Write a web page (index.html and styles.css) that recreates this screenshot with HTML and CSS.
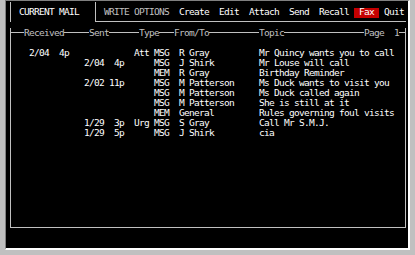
FILE: index.html
```html
<!DOCTYPE html>
<html>
<head>
<meta charset="utf-8">
<link rel="stylesheet" href="styles.css">
</head>
<body>
<div class="screen">
  <div class="frame">
    <div class="tabs">
      <div class="tab">CURRENT MAIL</div>
      <nav class="menu">
        <span class="mi dim">WRITE OPTIONS</span>
        <span class="mi">Create</span>
        <span class="mi">Edit</span>
        <span class="mi">Attach</span>
        <span class="mi">Send</span>
        <span class="mi">Recall</span>
        <span class="mi fax">Fax</span>
        <span class="mi">Quit</span>
      </nav>
    </div>
    <div class="panel">
      <div class="cols head">
        <span class="h-recv">Received</span>
        <span class="h-sent">Sent</span>
        <span class="h-type">Type</span>
        <span class="h-from">From/To</span>
        <span class="h-topic">Topic</span>
        <span class="h-page">Page  1</span>
      </div>
      <div class="list">
        <div class="cols"><span class="rd">2/04</span><span class="rt">4p</span><span class="fl">Att</span><span class="ty">MSG</span><span class="fr">R Gray</span><span class="tp">Mr Quincy wants you to call</span></div>
        <div class="cols"><span class="sd">2/04</span><span class="st">4p</span><span class="ty">MSG</span><span class="fr">J Shirk</span><span class="tp">Mr Louse will call</span></div>
        <div class="cols"><span class="ty">MEM</span><span class="fr">R Gray</span><span class="tp">Birthday Reminder</span></div>
        <div class="cols"><span class="sd">2/02</span><span class="st">11p</span><span class="ty">MSG</span><span class="fr">M Patterson</span><span class="tp">Ms Duck wants to visit you</span></div>
        <div class="cols"><span class="ty">MSG</span><span class="fr">M Patterson</span><span class="tp">Ms Duck called again</span></div>
        <div class="cols"><span class="ty">MSG</span><span class="fr">M Patterson</span><span class="tp">She is still at it</span></div>
        <div class="cols"><span class="ty">MEM</span><span class="fr">General</span><span class="tp">Rules governing foul visits</span></div>
        <div class="cols"><span class="sd">1/29</span><span class="st">3p</span><span class="fl">Urg</span><span class="ty">MSG</span><span class="fr">S Gray</span><span class="tp">Call Mr S.M.J.</span></div>
        <div class="cols"><span class="sd">1/29</span><span class="st">5p</span><span class="ty">MSG</span><span class="fr">J Shirk</span><span class="tp">cia</span></div>
      </div>
    </div>
  </div>
</div>
</body>
</html>
```

FILE: styles.css
```css
* { box-sizing: border-box; }

body {
  margin: 0;
  background: #c0c0c0;
  font-family: "DejaVu Sans Mono", monospace;
  font-size: 9.5px;
  letter-spacing: -0.72px;
  line-height: 10px;
  color: #fff;
}

.screen {
  margin-left: 5px;
  width: 405px;
  height: 250px;
  background: #000;
  border-left: 1px solid #808080;
  border-top: 1px solid #808080;
  border-right: 2px solid #fff;
  border-bottom: 2px solid #fff;
  padding-top: 1px;
}

.frame {
  margin-left: 4px;
  width: 396px;
}

.tabs {
  display: flex;
  height: 20px;
}

.tab {
  width: 86px;
  border-left: 1px solid #c0c0c0;
  border-right: 1px solid #c0c0c0;
  padding: 5px 0 0 8px;
  white-space: pre;
}

.menu {
  flex: 1;
  display: flex;
  align-items: flex-start;
  gap: 10px;
  border-bottom: 1px solid #c0c0c0;
  padding: 5px 0 0 8px;
}

.mi { white-space: pre; }
.dim { color: #c0c0c0; }

.fax {
  background: #c40000;
  margin: 1px -5px 0;
  padding: 0 5px;
  line-height: 8px;
  height: 10px;
}

.panel {
  height: 200px;
  border: 1px solid #c0c0c0;
  border-top: 0;
}

.cols {
  display: grid;
  grid-template-columns: repeat(78, 5px);
  grid-auto-rows: 10px;
  padding-left: 3px;
  height: 10px;
}

.cols > span { white-space: pre; grid-row: 1; }

.head {
  margin-top: 6px;
  background: linear-gradient(#c0c0c0, #c0c0c0) 0 4px / 100% 1px no-repeat;
}

.head > span { background: #000; color: #c0c0c0; }

.h-recv  { grid-column: 3 / span 8; }
.h-sent  { grid-column: 16 / span 4; }
.h-type  { grid-column: 26 / span 4; }
.h-from  { grid-column: 33 / span 7; }
.h-topic { grid-column: 50 / span 5; }
.h-page  { grid-column: 71 / span 7; }

.list { margin-top: 10px; }

.rd { grid-column: 4 / span 4; }
.rt { grid-column: 8 / span 4; text-align: right; }
.sd { grid-column: 15 / span 4; }
.st { grid-column: 19 / span 4; text-align: right; }
.fl { grid-column: 25 / span 3; }
.ty { grid-column: 29 / span 3; }
.fr { grid-column: 34 / span 16; }
.tp { grid-column: 50 / span 29; }
```
